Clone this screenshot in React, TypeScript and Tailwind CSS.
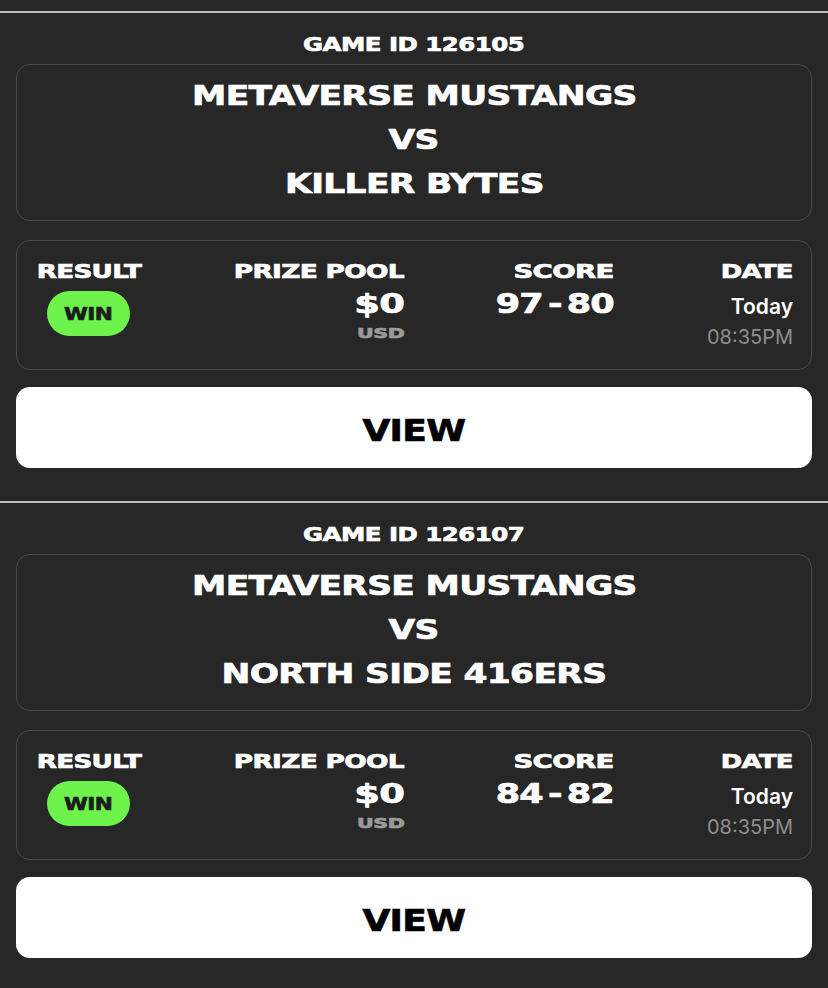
import React from "react";

const F = "font-['DejaVu_Sans',sans-serif] font-bold [-webkit-text-stroke:0.7px_currentColor]";

type Game = { id: string; home: string; away: string; score: string };

const games: Game[] = [
  { id: "126105", home: "METAVERSE MUSTANGS", away: "KILLER BYTES", score: "97 - 80" },
  { id: "126107", home: "METAVERSE MUSTANGS", away: "NORTH SIDE 416ERS", score: "84 - 82" },
];

function Card({ g }: { g: Game }) {
  return (
    <section className="border-t-2 border-[#bdbdbd] px-4 pt-[19px] pb-[33px]">
      <div className={`${F} text-center text-[20px] leading-[24px] text-white`}>
        <span className="inline-block scale-x-[1.22] whitespace-nowrap tracking-[-0.4px]">GAME ID {g.id}</span>
      </div>
      <div className={`${F} mt-[8px] h-[157px] rounded-[14px] border border-[#4a4a4a] pt-[9px] text-center text-[27px] leading-[44px] text-white`}>
        <div><span className="inline-block scale-x-[1.275] whitespace-nowrap tracking-[-0.5px]">{g.home}</span></div>
        <div><span className="inline-block scale-x-[1.275] tracking-[-0.5px]">VS</span></div>
        <div><span className="inline-block scale-x-[1.275] whitespace-nowrap tracking-[-0.5px]">{g.away}</span></div>
      </div>
      <div className="mt-[19px] grid h-[130px] grid-cols-[109px_261px_210px_179px] rounded-[14px] border border-[#4a4a4a] px-[17px] pt-[20px]">
        <div className="flex flex-col items-center">
          <span className={`${F} inline-block scale-x-[1.31] tracking-[-0.5px] text-[20px] leading-[20px] text-white`}>RESULT</span>
          <div className="mt-[10px] flex h-[45px] w-[83px] items-center justify-center rounded-full bg-[#6ef24c]">
            <span className={`${F} inline-block scale-x-[1.2] tracking-[-0.4px] text-[18px] leading-[20px] text-[#1c1c1c]`}>WIN</span>
          </div>
        </div>
        <div className="flex flex-col items-end text-right">
          <span className={`${F} inline-block origin-right scale-x-[1.32] tracking-[-0.5px] whitespace-nowrap text-[20px] leading-[20px] text-white`}>PRIZE POOL</span>
          <span className={`${F} mt-[9px] inline-block origin-right scale-x-[1.42] tracking-[-0.5px] text-[26px] leading-[28px] text-white`}>$0</span>
          <span className={`${F} mt-[7px] inline-block origin-right scale-x-[1.42] tracking-[-0.3px] text-[14.5px] leading-[16px] text-[#9a9a9a]`}>USD</span>
        </div>
        <div className="flex flex-col items-end text-right">
          <span className={`${F} inline-block origin-right scale-x-[1.38] tracking-[-0.5px] text-[20px] leading-[20px] text-white`}>SCORE</span>
          <span className={`${F} mt-[9px] inline-block origin-right scale-x-[1.3] tracking-[-0.6px] [word-spacing:-5px] whitespace-nowrap text-[27px] leading-[28px] text-white`}>{g.score}</span>
        </div>
        <div className="flex flex-col items-end text-right">
          <span className={`${F} inline-block origin-right scale-x-[1.29] tracking-[-0.5px] text-[20px] leading-[20px] text-white`}>DATE</span>
          <span className="mt-[14px] font-['Inter',sans-serif] text-[21px] font-semibold leading-[24px] text-white">Today</span>
          <span className="mt-[8px] font-['Inter',sans-serif] text-[20px] font-normal leading-[20px] text-[#8e8e8e]">08:35PM</span>
        </div>
      </div>
      <button className="mt-[17px] flex h-[81px] w-full items-center justify-center rounded-[14px] bg-white pt-[6px]">
        <span className={`${F} inline-block scale-x-[1.2] tracking-[-0.6px] text-[30px] leading-[32px] text-black`}>VIEW</span>
      </button>
    </section>
  );
}

export default function App() {
  return (
    <div className="min-h-[988px] w-full bg-[#272727] pt-[11px]">
      {games.map((g) => (
        <Card key={g.id} g={g} />
      ))}
    </div>
  );
}
